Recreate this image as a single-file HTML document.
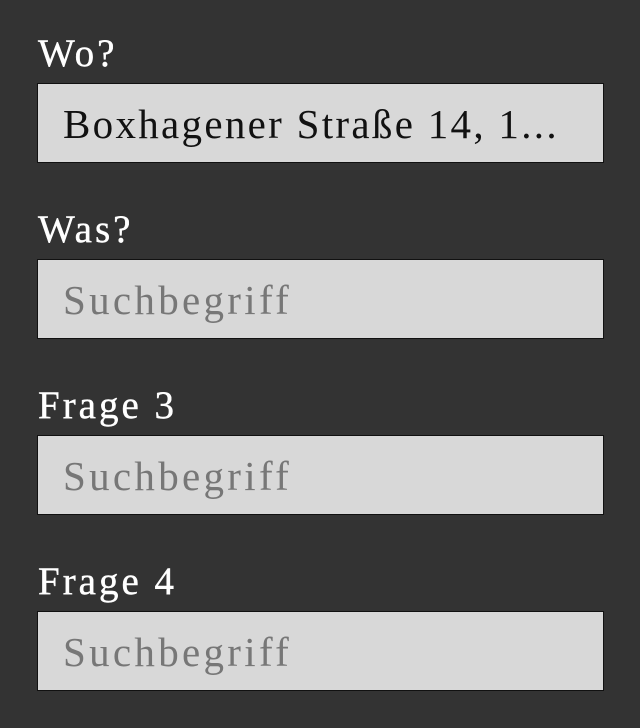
<!DOCTYPE html>
<html><head><meta charset="utf-8"><style>
html,body{margin:0;padding:0;background:#333333;width:640px;height:728px;overflow:hidden}
.l{position:absolute;left:38px;color:#fff;font:39px "Liberation Serif",serif;line-height:38px;letter-spacing:3px;-webkit-text-stroke:0.4px #fff}
.i{position:absolute;left:37px;width:565px;height:78px;border:1px solid #111;background:#d8d8d8;box-sizing:content-box}
.t{position:absolute;left:25px;top:0;font:41px "Liberation Serif",serif;line-height:80px;letter-spacing:2.3px;color:#111;white-space:nowrap}
.p{color:#777;letter-spacing:3.3px}
</style></head><body>
<div class="l" style="top:35px">Wo?</div>
<div class="i" style="top:83px"><div class="t">Boxhagener Straße 14, 1...</div></div>
<div class="l" style="top:211px">Was?</div>
<div class="i" style="top:259px"><div class="t p">Suchbegriff</div></div>
<div class="l" style="top:387px">Frage 3</div>
<div class="i" style="top:435px"><div class="t p">Suchbegriff</div></div>
<div class="l" style="top:563px">Frage 4</div>
<div class="i" style="top:611px"><div class="t p">Suchbegriff</div></div>
</body></html>
